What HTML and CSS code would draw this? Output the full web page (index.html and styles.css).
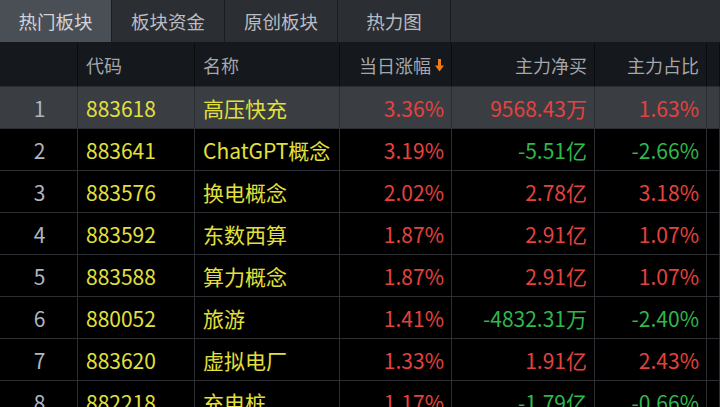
FILE: index.html
```html
<!DOCTYPE html>
<html lang="zh">
<head>
<meta charset="utf-8">
<link rel="stylesheet" href="styles.css">
</head>
<body>
<div class="app">
  <div class="tabs">
    <div class="tab active">热门板块</div>
    <div class="tab">板块资金</div>
    <div class="tab">原创板块</div>
    <div class="tab">热力图</div>
    <div class="tab-rest"></div>
  </div>
  <div class="grid head">
    <div class="c"></div>
    <div class="c l">代码</div>
    <div class="c l">名称</div>
    <div class="c r">当日涨幅<svg class="arrow" width="9" height="13" viewBox="0 0 9 13"><rect x="3" y="0" width="3" height="7" fill="#f07a1a"/><path d="M0 6.5 H9 L4.5 12.5 Z" fill="#f07a1a"/></svg></div>
    <div class="c r">主力净买</div>
    <div class="c r">主力占比</div>
    <div class="c"></div>
  </div>
  <div class="grid row sel">
    <div class="c idx">1</div><div class="c l y">883618</div><div class="c l y">高压快充</div><div class="c r up">3.36%</div><div class="c r up">9568.43万</div><div class="c r up">1.63%</div><div class="c"></div>
  </div>
  <div class="grid row">
    <div class="c idx">2</div><div class="c l y">883641</div><div class="c l y">ChatGPT概念</div><div class="c r up">3.19%</div><div class="c r dn">-5.51亿</div><div class="c r dn">-2.66%</div><div class="c"></div>
  </div>
  <div class="grid row">
    <div class="c idx">3</div><div class="c l y">883576</div><div class="c l y">换电概念</div><div class="c r up">2.02%</div><div class="c r up">2.78亿</div><div class="c r up">3.18%</div><div class="c"></div>
  </div>
  <div class="grid row">
    <div class="c idx">4</div><div class="c l y">883592</div><div class="c l y">东数西算</div><div class="c r up">1.87%</div><div class="c r up">2.91亿</div><div class="c r up">1.07%</div><div class="c"></div>
  </div>
  <div class="grid row">
    <div class="c idx">5</div><div class="c l y">883588</div><div class="c l y">算力概念</div><div class="c r up">1.87%</div><div class="c r up">2.91亿</div><div class="c r up">1.07%</div><div class="c"></div>
  </div>
  <div class="grid row">
    <div class="c idx">6</div><div class="c l y">880052</div><div class="c l y">旅游</div><div class="c r up">1.41%</div><div class="c r dn">-4832.31万</div><div class="c r dn">-2.40%</div><div class="c"></div>
  </div>
  <div class="grid row">
    <div class="c idx">7</div><div class="c l y">883620</div><div class="c l y">虚拟电厂</div><div class="c r up">1.33%</div><div class="c r up">1.91亿</div><div class="c r up">2.43%</div><div class="c"></div>
  </div>
  <div class="grid row">
    <div class="c idx">8</div><div class="c l y">882218</div><div class="c l y">充电桩</div><div class="c r up">1.17%</div><div class="c r dn">-1.79亿</div><div class="c r dn">-0.66%</div><div class="c"></div>
  </div>
</div>
</body>
</html>
```
FILE: styles.css
```css
* { box-sizing: border-box; }
html, body { margin: 0; padding: 0; background: #000; }
body {
  width: 720px;
  height: 407px;
  overflow: hidden;
  font-family: "Noto Sans CJK SC", "Noto Sans", sans-serif;
}
.app { width: 720px; }
.tabs {
  display: flex;
  height: 43px;
  background: #2b2e33;
  border-bottom: 1px solid #16181b;
}
.tab {
  width: 113px;
  display: flex;
  align-items: center;
  justify-content: center;
  font-size: 18.5px;
  color: #b9bcc1;
  border-right: 1px solid #1a1c20;
}
.tab:first-child { width: 112px; }
.tab.active { background: #4a4e55; color: #d0d3d8; }
.tab-rest { flex: 1; }
.grid {
  display: grid;
  grid-template-columns: 78px 117px 145px 112px 143px 112px 1fr;
}
.head { height: 44px; background: #15181c; }
.head .c {
  font-size: 18px;
  color: #a3a7ad;
  border-right: 1px solid #0b0c0e;
  border-bottom: 1px solid #2a2d31;
}
.row { height: 42px; background: #000; }
.row.sel { background: #3a3d42; }
.c {
  display: flex;
  align-items: center;
  white-space: nowrap;
  border-right: 1px solid #2c2f33;
  border-bottom: 1px solid #2c2f33;
  font-size: 21px;
  overflow: hidden;
}
.c.l { padding-left: 8px; }
.c.r { justify-content: flex-end; padding-right: 7px; }
.idx { justify-content: center; color: #aeb6c2; padding-left: 2px; }
.y { color: #e2e03c; }
.up { color: #e5423f; }
.dn { color: #2fb84c; }
.arrow { margin-left: 4px; margin-top: 2px; }
```
